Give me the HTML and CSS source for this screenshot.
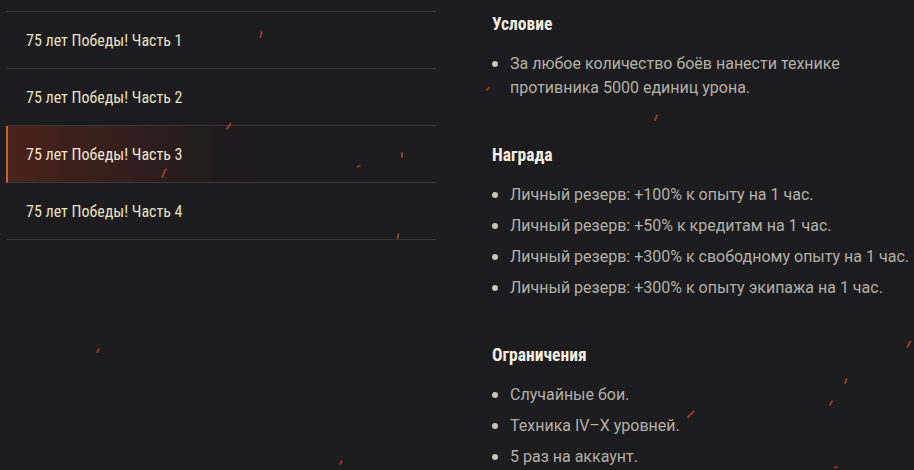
FILE: index.html
```html
<!DOCTYPE html>
<html lang="ru">
<head>
<meta charset="utf-8">
<link rel="stylesheet" href="styles.css">
</head>
<body>
<div class="page">
  <nav class="tabs">
    <div class="tab">75 лет Победы! Часть 1</div>
    <div class="tab">75 лет Победы! Часть 2</div>
    <div class="tab active">75 лет Победы! Часть 3</div>
    <div class="tab">75 лет Победы! Часть 4</div>
  </nav>
  <main class="details">
    <section class="block">
      <h3>Условие</h3>
      <ul>
        <li><span>За любое количество боёв нанести технике противника 5000 единиц урона.</span></li>
      </ul>
    </section>
    <section class="block">
      <h3>Награда</h3>
      <ul>
        <li><span>Личный резерв: +100% к опыту на 1 час.</span></li>
        <li><span>Личный резерв: +50% к кредитам на 1 час.</span></li>
        <li><span>Личный резерв: +300% к свободному опыту на 1 час.</span></li>
        <li><span>Личный резерв: +300% к опыту экипажа на 1 час.</span></li>
      </ul>
    </section>
    <section class="block">
      <h3>Ограничения</h3>
      <ul>
        <li><span>Случайные бои.</span></li>
        <li><span>Техника IV–X уровней.</span></li>
        <li><span>5 раз на аккаунт.</span></li>
      </ul>
    </section>
  </main>
</div>
<div class="sparks">
  <i style="left:260px;top:31px;height:7px;transform:rotate(15deg)"></i>
  <i style="left:228px;top:122px;height:8px;transform:rotate(35deg)"></i>
  <i style="left:401px;top:152px;height:6px;transform:rotate(0deg)"></i>
  <i style="left:358px;top:164px;height:4px;transform:rotate(60deg)"></i>
  <i style="left:163px;top:168px;height:10px;transform:rotate(25deg)"></i>
  <i style="left:397px;top:233px;height:6px;transform:rotate(10deg)"></i>
  <i style="left:97px;top:348px;height:5px;transform:rotate(20deg)"></i>
  <i style="left:487px;top:86px;height:5px;transform:rotate(50deg)"></i>
  <i style="left:655px;top:114px;height:7px;transform:rotate(25deg)"></i>
  <i style="left:908px;top:340px;height:8px;transform:rotate(30deg)"></i>
  <i style="left:845px;top:378px;height:6px;transform:rotate(20deg)"></i>
  <i style="left:830px;top:400px;height:6px;transform:rotate(30deg)"></i>
  <i style="left:690px;top:409px;height:10px;transform:rotate(45deg)"></i>
  <i style="left:835px;top:465px;height:4px;transform:rotate(70deg)"></i>
  <i style="left:340px;top:460px;height:5px;transform:rotate(20deg)"></i>
</div>
</body>
</html>
```
FILE: styles.css
```css
* { box-sizing: border-box; }
html, body { margin: 0; padding: 0; }
body {
  background: #1c1b1d;
  width: 914px;
  height: 470px;
  overflow: hidden;
  font-family: Roboto, "Noto Sans", sans-serif;
  position: relative;
}
.page {
  display: flex;
  padding: 11px 0 0 6px;
}
.tabs {
  width: 430px;
  flex: none;
  display: flex;
  flex-direction: column;
  border-top: 1px solid #38373a;
}
.tab {
  height: 57px;
  border-bottom: 1px solid #38373a;
  border-left: 2px solid transparent;
  padding-left: 18px;
  display: flex;
  align-items: center;
  font-family: "Roboto Condensed", "Liberation Sans Narrow", Roboto, sans-serif;
  font-stretch: condensed;
  font-size: 16px;
  color: #e6e1c3;
}
.tab.active {
  border-left-color: #c9622f;
  background: linear-gradient(90deg, rgba(100, 38, 24, 0.62) 0%, rgba(80, 34, 24, 0.4) 30%, rgba(40, 28, 28, 0.12) 50%, rgba(28, 27, 29, 0) 62%);
  color: #f0e3d2;
}
.details {
  margin-left: 56px;
  padding-top: 1px;
  flex: 1;
  padding-right: 4px;
}
.block {
  padding-bottom: 36px;
}
h3 {
  margin: 0 0 16px;
  font-family: "Roboto Condensed", "Liberation Sans Narrow", Roboto, sans-serif;
  font-stretch: condensed;
  font-weight: 700;
  font-size: 17.5px;
  line-height: 24px;
  color: #f4efe2;
}
ul {
  list-style: none;
  margin: 0;
  padding: 0;
}
li {
  display: flex;
  align-items: flex-start;
  margin-bottom: 7px;
  font-size: 16px;
  line-height: 24px;
  color: #b3b0a8;
}
li::before {
  content: "";
  flex: none;
  width: 6px;
  height: 6px;
  border-radius: 50%;
  background: #c9c5b8;
  margin: 9px 12px 0 0;
}
.sparks i {
  position: absolute;
  width: 1.5px;
  background: #b8402a;
  border-radius: 1px;
  opacity: 0.8;
}
```
